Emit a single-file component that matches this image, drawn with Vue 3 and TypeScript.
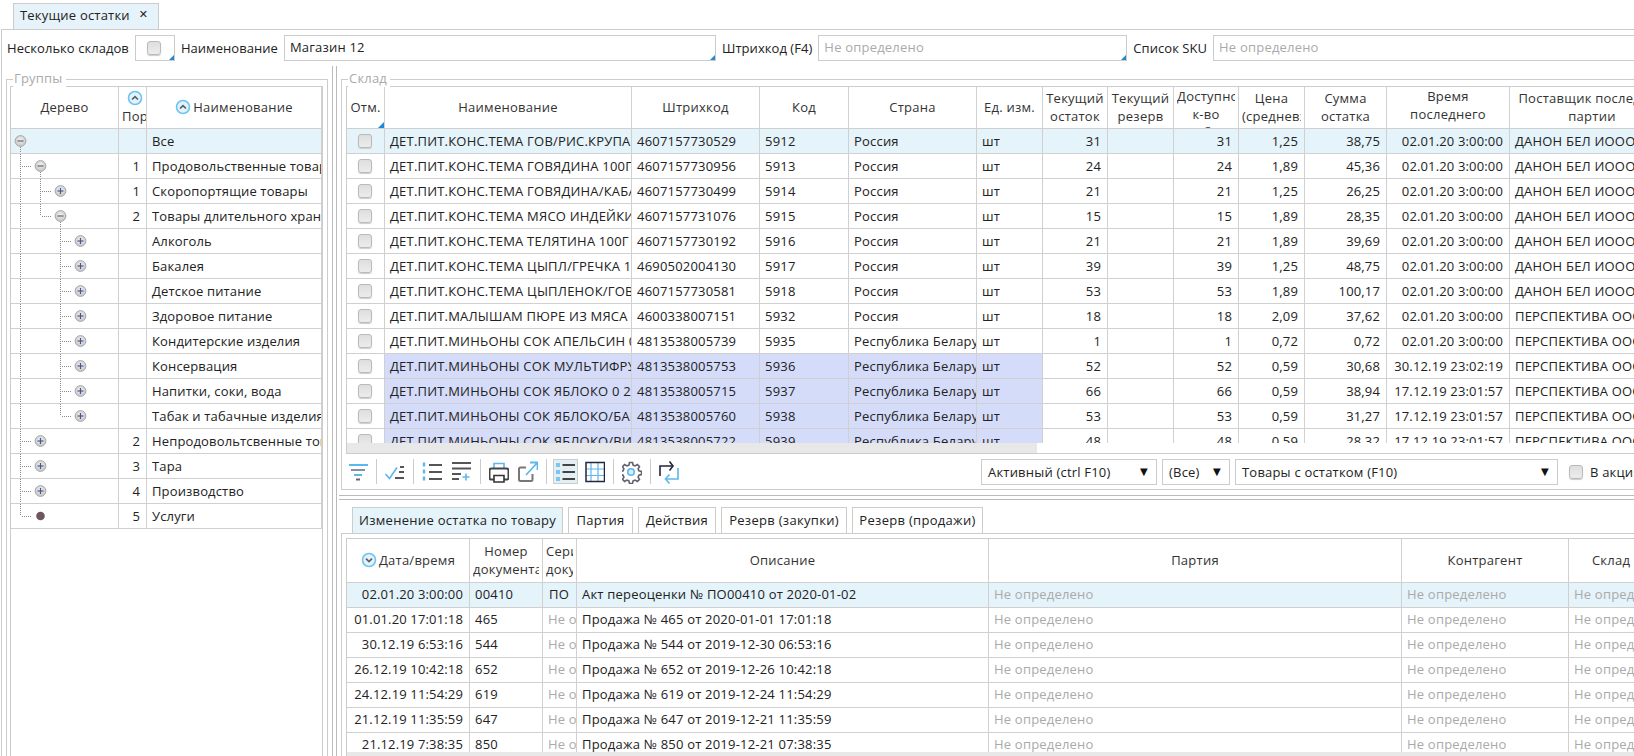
<script setup lang="ts">
interface TreeRow { name: string; ord: string; level: number; icon: 'minus' | 'plus' | 'dot'; full: number[]; half: number[]; down: boolean }

const treeRows: TreeRow[] = [
  { name: 'Все', ord: '', level: 0, icon: 'minus', full: [], half: [], down: true },
  { name: 'Продовольственные товары', ord: '1', level: 1, icon: 'minus', full: [20], half: [], down: true },
  { name: 'Скоропортящие товары', ord: '1', level: 2, icon: 'plus', full: [20, 40], half: [], down: false },
  { name: 'Товары длительного хранения', ord: '2', level: 2, icon: 'minus', full: [20], half: [40], down: true },
  { name: 'Алкоголь', ord: '', level: 3, icon: 'plus', full: [20, 60], half: [], down: false },
  { name: 'Бакалея', ord: '', level: 3, icon: 'plus', full: [20, 60], half: [], down: false },
  { name: 'Детское питание', ord: '', level: 3, icon: 'plus', full: [20, 60], half: [], down: false },
  { name: 'Здоровое питание', ord: '', level: 3, icon: 'plus', full: [20, 60], half: [], down: false },
  { name: 'Кондитерские изделия', ord: '', level: 3, icon: 'plus', full: [20, 60], half: [], down: false },
  { name: 'Консервация', ord: '', level: 3, icon: 'plus', full: [20, 60], half: [], down: false },
  { name: 'Напитки, соки, вода', ord: '', level: 3, icon: 'plus', full: [20, 60], half: [], down: false },
  { name: 'Табак и табачные изделия', ord: '', level: 3, icon: 'plus', full: [20], half: [60], down: false },
  { name: 'Непродовольтсвенные товары', ord: '2', level: 1, icon: 'plus', full: [20], half: [], down: false },
  { name: 'Тара', ord: '3', level: 1, icon: 'plus', full: [20], half: [], down: false },
  { name: 'Производство', ord: '4', level: 1, icon: 'plus', full: [20], half: [], down: false },
  { name: 'Услуги', ord: '5', level: 1, icon: 'dot', full: [], half: [20], down: false },
]

const mainCols = [38, 247, 128, 89, 128, 66, 65, 66, 65, 66, 82, 123, 165]
const lowerCols = [123, 73, 34, 412, 413, 167, 170]

const D = 'ДЕТ.ПИТ.'
const danon = 'ДАНОН БЕЛ ИООО'
const persp = 'ПЕРСПЕКТИВА ООО'
const by = 'Республика Беларусь'
const t0 = '02.01.20 3:00:00'
const t1 = '17.12.19 23:01:57'
const mainRows = [
  [D + 'КОНС.ТЕМА ГОВ/РИС.КРУПА 100Г', '4607157730529', '5912', 'Россия', '31', '31', '1,25', '38,75', t0, danon],
  [D + 'КОНС.ТЕМА ГОВЯДИНА 100Г', '4607157730956', '5913', 'Россия', '24', '24', '1,89', '45,36', t0, danon],
  [D + 'КОНС.ТЕМА ГОВЯДИНА/КАБАЧКИ', '4607157730499', '5914', 'Россия', '21', '21', '1,25', '26,25', t0, danon],
  [D + 'КОНС.ТЕМА МЯСО ИНДЕЙКИ 100Г', '4607157731076', '5915', 'Россия', '15', '15', '1,89', '28,35', t0, danon],
  [D + 'КОНС.ТЕМА ТЕЛЯТИНА 100Г', '4607157730192', '5916', 'Россия', '21', '21', '1,89', '39,69', t0, danon],
  [D + 'КОНС.ТЕМА ЦЫПЛ/ГРЕЧКА 100Г', '4690502004130', '5917', 'Россия', '39', '39', '1,25', '48,75', t0, danon],
  [D + 'КОНС.ТЕМА ЦЫПЛЕНОК/ГОВ 100Г', '4607157730581', '5918', 'Россия', '53', '53', '1,89', '100,17', t0, danon],
  [D + 'МАЛЫШАМ ПЮРЕ ИЗ МЯСА ИНДЕЙКИ', '4600338007151', '5932', 'Россия', '18', '18', '2,09', '37,62', t0, persp],
  [D + 'МИНЬОНЫ СОК АПЕЛЬСИН 0,2Л', '4813538005739', '5935', by, '1', '1', '0,72', '0,72', t0, persp],
  [D + 'МИНЬОНЫ СОК МУЛЬТИФРУКТ 0,2Л', '4813538005753', '5936', by, '52', '52', '0,59', '30,68', '30.12.19 23:02:19', persp],
  [D + 'МИНЬОНЫ СОК ЯБЛОКО 0 2Л', '4813538005715', '5937', by, '66', '66', '0,59', '38,94', t1, persp],
  [D + 'МИНЬОНЫ СОК ЯБЛОКО/БАНАН 0,2Л', '4813538005760', '5938', by, '53', '53', '0,59', '31,27', t1, persp],
  [D + 'МИНЬОНЫ СОК ЯБЛОКО/ВИНОГРАД', '4813538005722', '5939', by, '48', '48', '0,59', '28,32', t1, persp],
]

const lowerRows = [
  ['02.01.20 3:00:00', '00410', 'ПО', 'Акт переоценки № ПО00410 от 2020-01-02'],
  ['01.01.20 17:01:18', '465', '', 'Продажа № 465 от 2020-01-01 17:01:18'],
  ['30.12.19 6:53:16', '544', '', 'Продажа № 544 от 2019-12-30 06:53:16'],
  ['26.12.19 10:42:18', '652', '', 'Продажа № 652 от 2019-12-26 10:42:18'],
  ['24.12.19 11:54:29', '619', '', 'Продажа № 619 от 2019-12-24 11:54:29'],
  ['21.12.19 11:35:59', '647', '', 'Продажа № 647 от 2019-12-21 11:35:59'],
  ['21.12.19 7:38:35', '850', '', 'Продажа № 850 от 2019-12-21 07:38:35'],
]

const tabs = [
  { label: 'Изменение остатка по товару', width: 211 },
  { label: 'Партия', width: 65 },
  { label: 'Действия', width: 78 },
  { label: 'Резерв (закупки)', width: 126 },
  { label: 'Резерв (продажи)', width: 131 },
]
const ND = 'Не определено'
</script>

<template>
  <div class="app">
    <svg class="defs" width="0" height="0">
      <defs>
        <radialGradient id="node" cx="50%" cy="40%" r="60%">
          <stop offset="0" stop-color="#f2f2f2" />
          <stop offset="1" stop-color="#c4c4c4" />
        </radialGradient>
        <symbol id="sort-up" viewBox="0 0 16 16">
          <circle cx="8" cy="8" r="6.5" fill="#e4f2fb" stroke="#6cc4f2" stroke-width="1.6" />
          <path d="M5 9.5 8 6.6l3 2.9" fill="none" stroke="#56606c" stroke-width="1.7" />
        </symbol>
        <symbol id="sort-down" viewBox="0 0 16 16">
          <circle cx="8" cy="8" r="6.5" fill="#e4f2fb" stroke="#6cc4f2" stroke-width="1.6" />
          <path d="M5 6.6 8 9.5l3-2.9" fill="none" stroke="#56606c" stroke-width="1.7" />
        </symbol>
      </defs>
    </svg>

    <div class="tabbar">
      <div class="tab-top">
        <span>Текущие остатки</span>
        <span class="close">✕</span>
      </div>
    </div>

    <div class="main">
      <div class="filters">
        <span class="flabel">Несколько складов</span>
        <div class="field box-field corner"><i class="cb"></i></div>
        <span class="flabel">Наименование</span>
        <div class="field f-name corner">Магазин 12</div>
        <span class="flabel">Штрихкод (F4)</span>
        <div class="field f-bar corner muted">Не определено</div>
        <span class="flabel">Список SKU</span>
        <div class="field f-sku muted">Не определено</div>
      </div>

      <div class="body">
        <section class="fs fs-left">
          <span class="legend">Группы</span>
          <div class="tree-wrap">
            <table class="grid tree-table">
              <colgroup>
                <col style="width: 108px" /><col style="width: 28px" /><col style="width: 175px" />
              </colgroup>
              <thead>
                <tr>
                  <th><div class="th">Дерево</div></th>
                  <th>
                    <div class="th stack">
                      <svg class="sort sort-por" width="16" height="16"><use href="#sort-up" /></svg>
                      <span class="por">Пор</span>
                    </div>
                  </th>
                  <th>
                    <div class="th inline">
                      <svg class="sort" width="16" height="16"><use href="#sort-up" /></svg>Наименование
                    </div>
                  </th>
                </tr>
              </thead>
              <tbody>
                <tr v-for="(r, i) in treeRows" :key="r.name" :class="{ sel: i === 0 }">
                  <td class="tree-cell">
                    <svg class="tree-svg" width="107" height="24" viewBox="0 0 107 24">
                      <path
                        v-for="x in r.full"
                        :key="'f' + x"
                        :d="`M${x - 10.5} 0V25`"
                        class="dots"
                      />
                      <path
                        v-for="x in r.half"
                        :key="'h' + x"
                        :d="`M${x - 10.5} 0V12`"
                        class="dots"
                      />
                      <path
                        v-if="r.level > 0"
                        :d="`M${r.level * 20 - 9} 12.5H${r.level * 20 + 0.5}`"
                        class="dots"
                      />
                      <path
                        v-if="r.down"
                        :d="`M${(r.level + 1) * 20 - 10.5} 12V25`"
                        class="dots"
                      />
                      <template v-if="r.icon !== 'dot'">
                        <circle :cx="(r.level + 1) * 20 - 10.5" cy="12" r="5.4" fill="url(#node)" stroke="#a8a8a8" />
                        <path
                          :d="`M${(r.level + 1) * 20 - 13.5} 12h6`"
                          :stroke="r.icon === 'plus' ? '#4a5590' : '#666'"
                          stroke-width="1.2"
                        />
                        <path
                          v-if="r.icon === 'plus'"
                          :d="`M${(r.level + 1) * 20 - 10.5} 9v6`"
                          stroke="#4a5590"
                          stroke-width="1.2"
                        />
                      </template>
                      <circle v-else :cx="(r.level + 1) * 20 - 10.5" cy="12" r="4.3" fill="#6e565e" />
                    </svg>
                  </td>
                  <td class="num">{{ r.ord }}</td>
                  <td>{{ r.name }}</td>
                </tr>
              </tbody>
            </table>
          </div>
        </section>

        <div class="vsplit"></div>

        <div class="right">
          <section class="fs fs-stock">
            <span class="legend">Склад</span>
            <div class="stock-wrap">
              <div class="stock-scroll">
                <table class="grid" :style="{ width: mainCols.reduce((a, b) => a + b, 0) + 'px' }">
                  <colgroup>
                    <col v-for="(w, i) in mainCols" :key="i" :style="{ width: w + 'px' }" />
                  </colgroup>
                  <thead>
                    <tr>
                      <th class="mark-th"><div class="th">Отм.</div></th>
                      <th><div class="th">Наименование</div></th>
                      <th><div class="th">Штрихкод</div></th>
                      <th><div class="th">Код</div></th>
                      <th><div class="th">Страна</div></th>
                      <th><div class="th">Ед. изм.</div></th>
                      <th><div class="th">Текущий остаток</div></th>
                      <th><div class="th">Текущий резерв</div></th>
                      <th><div class="th">Доступное к-во (свободно)</div></th>
                      <th><div class="th">Цена (средневзв.)</div></th>
                      <th><div class="th">Сумма остатка</div></th>
                      <th><div class="th">Время последнего изменения</div></th>
                      <th><div class="th">Поставщик последней партии</div></th>
                    </tr>
                  </thead>
                  <tbody>
                    <tr v-for="(r, i) in mainRows" :key="r[1]" :class="{ sel: i === 0, hl: i > 8 }">
                      <td class="mark"><i class="cb"></i></td>
                      <td class="c">{{ r[0] }}</td>
                      <td class="c">{{ r[1] }}</td>
                      <td class="c">{{ r[2] }}</td>
                      <td class="c">{{ r[3] }}</td>
                      <td class="c">шт</td>
                      <td class="num">{{ r[4] }}</td>
                      <td></td>
                      <td class="num">{{ r[5] }}</td>
                      <td class="num">{{ r[6] }}</td>
                      <td class="num">{{ r[7] }}</td>
                      <td class="num">{{ r[8] }}</td>
                      <td>{{ r[9] }}</td>
                    </tr>
                  </tbody>
                </table>
              </div>
              <div class="hbar"></div>
            </div>

            <div class="toolbar">
              <svg class="ic w20" viewBox="348 461 20 24">
                <path d="M349 466h19" stroke="#5cb8ea" stroke-width="2" />
                <path d="M351 471h14" stroke="#7d93a8" stroke-width="2" />
                <path d="M354 476h8" stroke="#5cb8ea" stroke-width="2" />
                <path d="M356 480.500h4" stroke="#666" stroke-width="2" />
              </svg>
              <i class="sep"></i>
              <svg class="ic w20" viewBox="385 461 20 24">
                <path d="M385.500 475l4 4.500 7.500-11" fill="none" stroke="#5cb8ea" stroke-width="1.600" />
                <path d="M400 468h4M399 473h5M395 479h9" stroke="#555" stroke-width="1.800" />
              </svg>
              <i class="sep"></i>
              <svg class="ic w20" viewBox="422 461 20 24">
                <path d="M424 463.500v4M424 470.500v4M424 477.500v4" stroke="#5cb8ea" stroke-width="2.400" />
                <path d="M429 466h13M429 473h13M429 480h13" stroke="#555" stroke-width="2" />
              </svg>
              <svg class="ic w22" viewBox="451 461 22 24">
                <path d="M453 464h19M453 469.500h19M453 475h9M453 480h7" stroke="#555" stroke-width="1.800" />
                <path d="M463.500 478h7M467 474.500v7" stroke="#5cb8ea" stroke-width="1.600" />
              </svg>
              <i class="sep"></i>
              <svg class="ic w20" viewBox="490 461 20 24">
                <path d="M495 469v-4.500h10v4.500" fill="none" stroke="#5cb8ea" stroke-width="1.600" />
                <path d="M495 480.500h-3a1.500 1.500 0 0 1-1.500-1.500v-7.500a2 2 0 0 1 2-2h15a2 2 0 0 1 2 2V479a1.500 1.500 0 0 1-1.500 1.500h-3" fill="none" stroke="#444" stroke-width="2" />
                <path d="M495 476.500h10v6.500h-10z" fill="#fff" stroke="#333" stroke-width="1.600" />
              </svg>
              <svg class="ic w21" viewBox="518 461 21 24">
                <path d="M533.500 475v5.500a1.500 1.500 0 0 1-1.500 1.500h-10.500a1.500 1.500 0 0 1-1.500-1.500V470a1.500 1.500 0 0 1 1.500-1.500h5.500" fill="none" stroke="#777" stroke-width="2" />
                <path d="M527 476l11-12M531 463.500h7.500v7.500" fill="none" stroke="#5cb8ea" stroke-width="1.800" />
              </svg>
              <i class="sep"></i>
              <div class="active-btn">
                <svg class="ic w20" viewBox="556 461 20 24">
                  <path d="M556 464h4v4h-4zM556 471h4v4h-4zM556 478h4v4h-4z" fill="#7cc5ee" />
                  <path d="M562.500 466h12.500M562.500 473h12.500M562.500 480h12.500" stroke="#444" stroke-width="2" />
                </svg>
              </div>
              <svg class="ic w21" viewBox="585 461 21 24">
                <path d="M592 463v20M599 463v20M587 470h19M587 476.500h19" stroke="#5cb8ea" stroke-width="1.200" />
                <rect x="587" y="463.500" width="18.500" height="19" fill="none" stroke="#23263c" stroke-width="1.500" />
              </svg>
              <i class="sep"></i>
              <svg class="ic w20" viewBox="623 461 20 24">
                <path d="M630.500 463.500h3l.6 2.600 2 .8 2.300-1.400 2.100 2.100-1.400 2.300.8 2 2.600.6v3l-2.600.6-.8 2 1.400 2.300-2.100 2.100-2.300-1.400-2 .8-.6 2.600h-3l-.6-2.600-2-.8-2.300 1.400-2.100-2.100 1.400-2.300-.8-2-2.600-.6v-3l2.600-.6.8-2-1.400-2.300 2.100-2.100 2.300 1.400 2-.8z" fill="none" stroke="#62606c" stroke-width="1.600" />
                <circle cx="632" cy="473" r="3.300" fill="#d6ecf9" stroke="#5cb8ea" stroke-width="1.600" />
              </svg>
              <i class="sep"></i>
              <svg class="ic w20" viewBox="660 461 20 24">
                <path d="M661 477v-10h12" fill="none" stroke="#23263c" stroke-width="1.600" />
                <path d="M670.500 462.500l3.500 4.500-3.500 4.500" fill="none" stroke="#23263c" stroke-width="1.600" />
                <path d="M679 469v11h-12" fill="none" stroke="#5cb8ea" stroke-width="1.600" />
                <path d="M670.500 475.500l-4 4.500 4 4.500" fill="none" stroke="#5cb8ea" stroke-width="1.600" />
              </svg>

              <div class="selects">
                <div class="select s1"><span>Активный (ctrl F10)</span><b>▼</b></div>
                <div class="select s2"><span>(Все)</span><b>▼</b></div>
                <div class="select s3"><span>Товары с остатком (F10)</span><b>▼</b></div>
                <i class="cb"></i>
                <span class="promo">В акции</span>
              </div>
            </div>
          </section>

          <div class="hsplit"></div>

          <div class="sub-tabs">
            <div
              v-for="(t, i) in tabs"
              :key="t.label"
              class="sub-tab"
              :class="{ on: i === 0 }"
              :style="{ width: t.width + 'px' }"
            >{{ t.label }}</div>
          </div>

          <section class="fs fs-lower">
            <div class="lower-wrap">
              <div class="lower-scroll">
                <table class="grid lower" :style="{ width: lowerCols.reduce((a, b) => a + b, 0) + 'px' }">
                  <colgroup>
                    <col v-for="(w, i) in lowerCols" :key="i" :style="{ width: w + 'px' }" />
                  </colgroup>
                  <thead>
                    <tr>
                      <th>
                        <div class="th inline">
                          <svg class="sort" width="16" height="16"><use href="#sort-down" /></svg>Дата/время
                        </div>
                      </th>
                      <th><div class="th">Номер документа</div></th>
                      <th><div class="th">Серия документа</div></th>
                      <th><div class="th">Описание</div></th>
                      <th><div class="th">Партия</div></th>
                      <th><div class="th">Контрагент</div></th>
                      <th><div class="th">Склад контрагента</div></th>
                    </tr>
                  </thead>
                  <tbody>
                    <tr v-for="(r, i) in lowerRows" :key="r[1]" :class="{ sel: i === 0 }">
                      <td class="num">{{ r[0] }}</td>
                      <td>{{ r[1] }}</td>
                      <td :class="r[2] ? 'center' : 'muted'">{{ r[2] || ND }}</td>
                      <td>{{ r[3] }}</td>
                      <td class="muted">{{ ND }}</td>
                      <td class="muted">{{ ND }}</td>
                      <td class="muted">{{ ND }}</td>
                    </tr>
                  </tbody>
                </table>
              </div>
              <div class="lower-bar"></div>
            </div>
          </section>
        </div>
      </div>
    </div>
  </div>
</template>

<style>
html, body { margin: 0; background: #fff; overflow: hidden; }
</style>

<style scoped>
.app {
  width: 1634px;
  height: 756px;
  overflow: hidden;
  display: flex;
  flex-direction: column;
  font: 13px/18px "Open Sans", "Noto Sans", sans-serif;
  letter-spacing: 0.2px;
  color: #222;
  background: #fff;
}
.defs { position: absolute; }
.tabbar { height: 29px; padding-left: 13px; display: flex; align-items: flex-end; flex: none; }
.tab-top {
  height: 26px;
  width: 146px;
  box-sizing: border-box;
  background: #e6f3fa;
  border: 1px solid #ccc;
  border-bottom: 0;
  padding: 2px 0 0 6px;
  display: flex;
  gap: 9px;
}
.close { font-size: 11px; font-weight: 700; font-family: "DejaVu Sans", sans-serif; }

.main {
  flex: 1;
  min-height: 0;
  margin-left: 1px;
  margin-right: -4px;
  border: 1px solid #ccc;
  border-bottom: 0;
  display: flex;
  flex-direction: column;
}
.filters {
  height: 26px;
  padding: 5px 0 0 5px;
  display: flex;
  align-items: center;
  gap: 6px;
  flex: none;
}
.flabel { white-space: nowrap; letter-spacing: 0.05px; }
.field {
  position: relative;
  height: 26px;
  box-sizing: border-box;
  border: 1px solid #ccc;
  padding: 1px 5px;
  line-height: 20px;
  flex: none;
}
.corner::after {
  content: "";
  position: absolute;
  right: 0;
  bottom: 0;
  border-style: solid;
  border-width: 0 0 5px 5px;
  border-color: transparent transparent #1f88d2 transparent;
}
.box-field { width: 40px; display: flex; align-items: center; padding-left: 11px; }
.f-name { width: 432px; }
.f-bar { width: 309px; }
.f-sku { flex: 1; }
.muted { color: #aaa; }

.cb {
  display: block;
  width: 14px;
  height: 14px;
  box-sizing: border-box;
  border: 1px solid #bababa;
  border-radius: 3px;
  background: linear-gradient(#dedede, #ececec);
  box-shadow: 0 1px 1px #ccc;
  flex: none;
}

.body { flex: 1; min-height: 0; display: flex; padding-top: 19px; margin-top: -1px; }
.fs { position: relative; border: 1px solid #ccc; box-sizing: border-box; }
.legend {
  position: absolute;
  top: -11px;
  left: 6px;
  padding: 0 3px 0 1px;
  background: #fff;
  color: #aaa;
  line-height: 18px;
}
.fs-left {
  width: 322px;
  margin-left: 4px;
  margin-bottom: -10px;
  padding: 6px 4px 0 3px;
  flex: none;
  display: flex;
}
.tree-wrap { flex: 1; border: 1px solid #ccc; border-bottom: 0; overflow: hidden; }
.vsplit {
  width: 3px;
  height: calc(100% + 13px);
  margin: -13px 3px 0 4px;
  border-left: 1px solid #bbb;
  border-right: 1px solid #bbb;
  flex: none;
}
.right { flex: 1; min-width: 0; display: flex; flex-direction: column; margin-left: 1px; }

.grid { table-layout: fixed; border-collapse: separate; border-spacing: 0; }
.tree-table { width: 311px; letter-spacing: 0.15px; }
.grid th, .grid td {
  padding: 0;
  border-right: 1px solid #d0d0d0;
  border-bottom: 1px solid #d0d0d0;
  overflow: hidden;
  white-space: nowrap;
  font-weight: 400;
  box-sizing: border-box;
}
.grid th { height: 42px; color: #333; letter-spacing: 0.25px; }
.grid td { height: 25px; padding: 0 6px 0 5px; text-overflow: clip; }
.grid td.c { padding-right: 0; }
.grid td.num { text-align: right; letter-spacing: 0.15px; }
.grid td.center { text-align: center; }
.grid td.mark { padding: 0 0 0 11px; }
.grid tbody tr.sel td { background: #e5f3fa; }
.grid tbody tr.hl td.c { background: #d5dcf9; }
.th {
  height: 41px;
  margin: 0 3px;
  padding-bottom: 2px;
  box-sizing: border-box;
  display: grid;
  grid-template-columns: minmax(0, 1fr);
  align-items: safe center;
  text-align: center;
  white-space: normal;
  overflow: hidden;
  line-height: 18px;
}
.th.stack {
  display: flex;
  flex-direction: column;
  align-items: center;
  justify-content: center;
  margin: 0;
  padding: 0;
  white-space: nowrap;
}
.por { width: 27px; overflow: hidden; text-align: left; padding-left: 3px; box-sizing: border-box; }
.th.inline { display: flex; align-items: center; justify-content: center; gap: 2px; white-space: nowrap; }
.sort { flex: none; }
.sort-por { margin-left: 5px; margin-bottom: 1px; }
.tree-cell.tree-cell { padding: 0; }
.tree-svg { display: block; overflow: visible; }
.dots { fill: none; stroke: #8a8a8a; stroke-dasharray: 1 1; stroke-width: 1; }
.mark-th { position: relative; }
.mark-th::after {
  content: "";
  position: absolute;
  right: 0;
  bottom: 0;
  border-style: solid;
  border-width: 0 0 6px 6px;
  border-color: transparent transparent #1f88d2 transparent;
}

.fs-stock { height: 411px; margin-right: -10px; padding: 6px 0 0 4px; flex: none; }
.stock-wrap { border: 1px solid #ccc; border-width: 1px 0 1px 1px; }
.stock-scroll { height: 356px; overflow: hidden; }
.hbar { height: 10px; width: 690px; background: #e8e8e8; }
.toolbar { height: 35px; display: flex; align-items: center; gap: 8px; padding-left: 2px; }
.ic { height: 24px; flex: none; display: block; }
.w20 { width: 20px; }
.w21 { width: 21px; }
.w22 { width: 22px; }
.sep { width: 1px; height: 25px; background: #ccc; flex: none; }
.active-btn {
  width: 25px;
  height: 25px;
  margin: 0 -2px;
  box-sizing: border-box;
  background: #e4eff5;
  border: 1px solid #ccc;
  display: flex;
  align-items: center;
  justify-content: center;
  flex: none;
}
.selects { display: flex; align-items: center; gap: 5px; margin-left: 294px; flex: none; }
.select {
  height: 26px;
  box-sizing: border-box;
  border: 1px solid #ccc;
  padding: 0 8px 0 6px;
  display: flex;
  align-items: center;
  justify-content: space-between;
  flex: none;
}
.select b { font: 10px "DejaVu Sans", sans-serif; color: #111; }
.s1 { width: 176px; }
.s2 { width: 68px; }
.s3 { width: 323px; margin-right: 6px; }
.promo { margin-left: 2px; white-space: nowrap; }

.hsplit {
  height: 3px;
  margin: 5px -10px 0 -2px;
  border-top: 1px solid #bbb;
  border-bottom: 1px solid #bbb;
  flex: none;
}
.sub-tabs { display: flex; gap: 5px; padding: 7px 0 0 11px; height: 26px; flex: none; }
.sub-tab {
  height: 26px;
  box-sizing: border-box;
  border: 1px solid #ccc;
  border-bottom: 0;
  text-align: center;
  line-height: 25px;
  letter-spacing: 0.3px;
  white-space: nowrap;
  flex: none;
}
.sub-tab.on { background: #e5f3fa; }
.fs-lower { flex: 1; min-height: 0; margin-right: -10px; margin-bottom: -5px; padding: 4px 0 0 4px; }
.lower-wrap { border: 1px solid #ccc; border-width: 1px 0 0 1px; display: flex; flex-direction: column; }
.lower-scroll { height: 213px; overflow: hidden; flex: none; }
.lower th { height: 44px; }
.lower .th { height: 43px; }
.lower td { padding-bottom: 2px; }
.lower-bar { height: 6px; background: #e8e8e8; flex: none; }
</style>
